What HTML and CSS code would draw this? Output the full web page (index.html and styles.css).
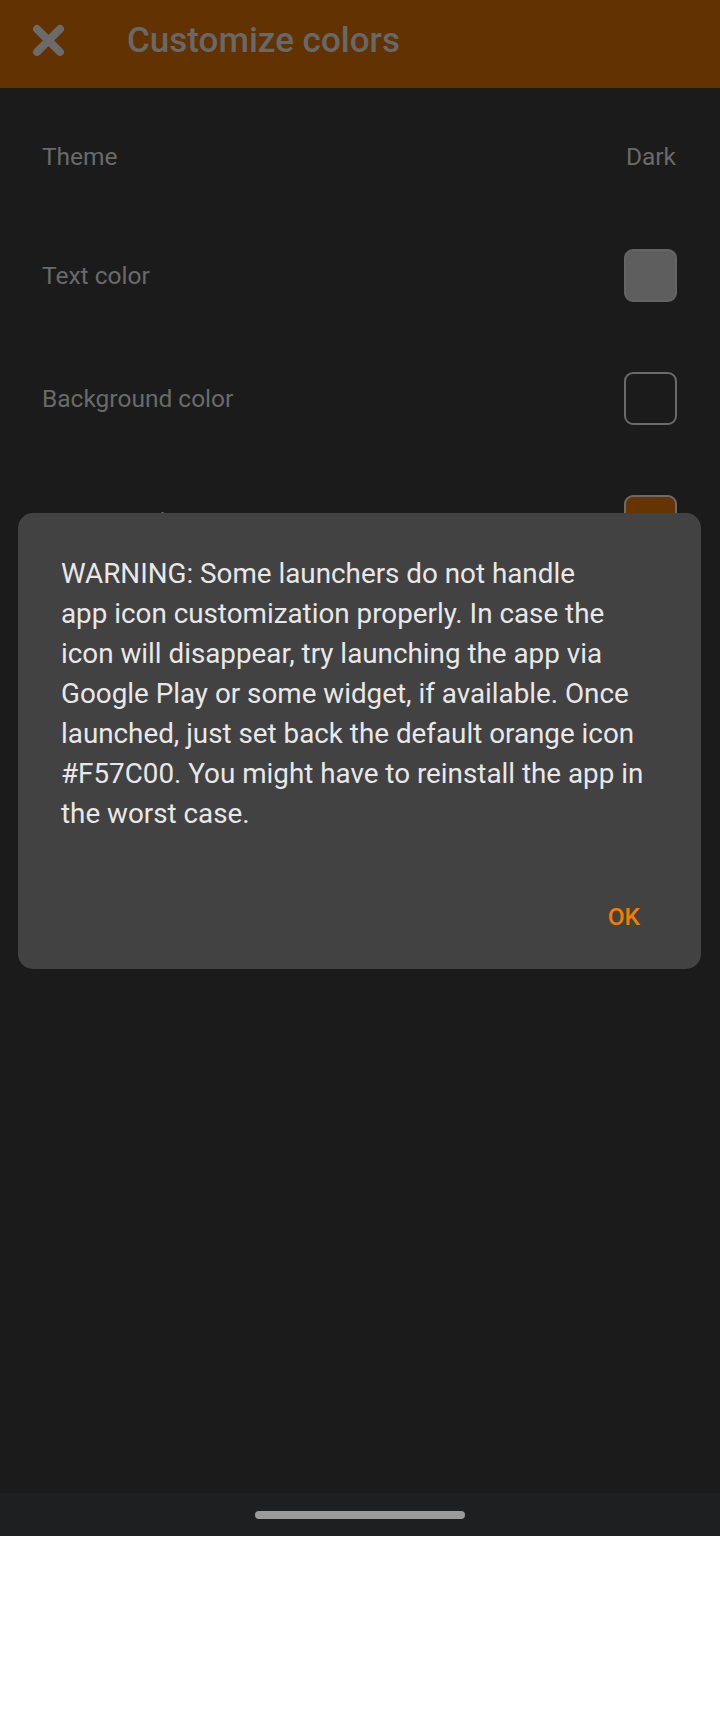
FILE: index.html
```html
<!DOCTYPE html>
<html lang="en">
<head>
<meta charset="utf-8">
<title>Customize colors</title>
<link rel="stylesheet" href="styles.css">
</head>
<body>
<div class="screen">
  <header class="toolbar">
    <span class="close-btn">
      <svg width="40" height="40" viewBox="0 0 40 40" aria-hidden="true">
        <path d="M8 8 L31 31 M31 8 L8 31" stroke="currentColor" stroke-width="8" stroke-linecap="round" fill="none"/>
      </svg>
    </span>
    <h1 class="title">Customize colors</h1>
  </header>

  <main class="list">
    <div class="row row-theme">
      <span class="label">Theme</span>
      <span class="value">Dark</span>
    </div>
    <div class="row">
      <span class="label">Text color</span>
      <span class="swatch swatch-text"></span>
    </div>
    <div class="row">
      <span class="label">Background color</span>
      <span class="swatch swatch-bg"></span>
    </div>
    <div class="row">
      <span class="label">Primary color</span>
      <span class="swatch swatch-primary"></span>
    </div>

    <div class="dialog" role="dialog">
      <p class="dialog-text">WARNING: Some launchers do not handle<br>app icon customization properly. In case the<br>icon will disappear, try launching the app via<br>Google Play or some widget, if available. Once<br>launched, just set back the default orange icon<br>#F57C00. You might have to reinstall the app in<br>the worst case.</p>
      <div class="dialog-actions">
        <button class="btn-ok" type="button">OK</button>
      </div>
    </div>
  </main>

  <nav class="navbar">
    <span class="handle"></span>
  </nav>
</div>
</body>
</html>
```

FILE: styles.css
```css
* {
  box-sizing: border-box;
}

html, body {
  margin: 0;
  padding: 0;
  background: #ffffff;
}

body {
  width: 720px;
  height: 1712px;
  font-family: Roboto, "Noto Sans", "Liberation Sans", sans-serif;
}

.screen {
  width: 720px;
  height: 1536px;
  display: flex;
  flex-direction: column;
  background: #1b1b1b;
}

.toolbar {
  height: 88px;
  flex: 0 0 88px;
  background: #623300;
  display: flex;
  align-items: center;
  padding: 0 0 7px 29px;
}

.close-btn {
  width: 40px;
  height: 40px;
  display: flex;
  color: #6b6b6b;
}

.title {
  margin: 0 0 0 58px;
  font-size: 35px;
  font-weight: 500;
  color: #686868;
  line-height: normal;
  letter-spacing: 0;
}

.list {
  flex: 1;
  position: relative;
  padding: 10px 43px 0 42px;
}

.row {
  height: 123px;
  display: flex;
  align-items: center;
  justify-content: space-between;
}

.row-theme {
  height: 116px;
}

.label,
.value {
  font-size: 24.5px;
  color: #6a6a6a;
  line-height: normal;
}

.value {
  margin-right: 1px;
}

.swatch {
  width: 53px;
  height: 53px;
  border-radius: 9px;
  border: 2px solid #6a6a6a;
}

.swatch-text {
  background: #5e5e5e;
  border-color: #646464;
}

.swatch-bg {
  background: transparent;
}

.swatch-primary {
  background: #663400;
}

.dialog {
  position: absolute;
  left: 18px;
  top: 425px;
  width: 683px;
  height: 456px;
  background: #424242;
  border-radius: 15px;
  display: flex;
  flex-direction: column;
  padding: 41px 20px 0 43px;
}

.dialog-text {
  margin: 0;
  font-size: 27.8px;
  line-height: 40px;
  color: #e8e8e8;
  white-space: nowrap;
}

.dialog-actions {
  margin-top: auto;
  display: flex;
  justify-content: flex-end;
  padding: 0 41px 38px 0;
}

.btn-ok {
  border: 0;
  background: none;
  padding: 0;
  margin: 0;
  font-family: Roboto, "Noto Sans", "Liberation Sans", sans-serif;
  font-size: 24.5px;
  font-weight: 500;
  line-height: normal;
  color: #f57c00;
}

.navbar {
  height: 43px;
  flex: 0 0 43px;
  background: #1d1f20;
  display: flex;
  align-items: center;
  justify-content: center;
}

.handle {
  width: 210px;
  height: 8px;
  border-radius: 4px;
  background: #9a9b9a;
}
```
